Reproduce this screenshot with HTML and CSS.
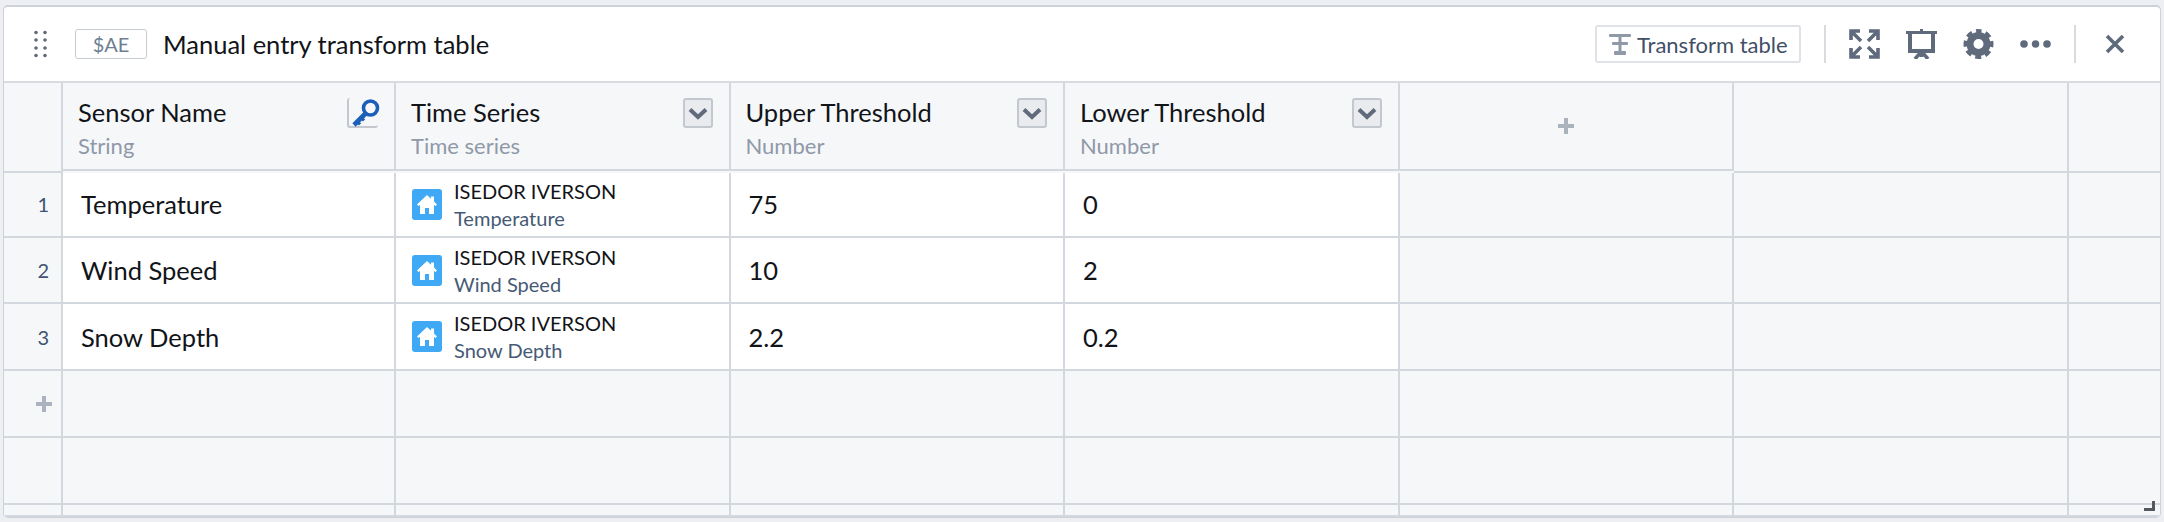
FILE: index.html
```html
<!DOCTYPE html>
<html lang="en">
<head>
    <meta charset="UTF-8">
    <title>Manual entry transform table</title>
    <link rel="stylesheet" href="styles.css">
</head>
<body>
    <div class="card">
        <div class="toolbar">
            <svg class="drag" width="14" height="28" viewBox="0 0 14 28"><g fill="#5f6b7c"><circle cx="2" cy="2.5" r="1.8"/><circle cx="11" cy="2.5" r="1.8"/><circle cx="2" cy="10" r="1.8"/><circle cx="11" cy="10" r="1.8"/><circle cx="2" cy="18" r="1.8"/><circle cx="11" cy="18" r="1.8"/><circle cx="2" cy="25.5" r="1.8"/><circle cx="11" cy="25.5" r="1.8"/></g></svg>
            <span class="badge">$AE</span>
            <span class="title">Manual entry transform table</span>
            <button class="transform-btn">
                <svg width="22" height="21" viewBox="0 0 22 21"><g fill="#8f99a8"><rect x="0" y="0" width="22" height="3" rx="1"/><rect x="3" y="8" width="16" height="3" rx="1"/><rect x="5" y="17" width="12" height="4" rx="1"/><rect x="9.5" y="2" width="3" height="16"/></g></svg>
                Transform table
            </button>
            <span class="divider"></span>
            <svg class="tool tool-first" width="31" height="30" viewBox="0 0 31 30"><g fill="none" stroke="#5f6b7c" stroke-width="3.6"><path d="M2 11V2h9M3 3l9 9"/><path d="M29 11V2h-9M28 3l-9 9"/><path d="M2 19v9h9M3 27l9-9"/><path d="M29 19v9h-9M28 27l-9-9"/></g></svg>
            <svg class="tool" width="31" height="30" viewBox="0 0 31 30"><g fill="none" stroke="#5f6b7c"><path stroke-width="3" d="M0 3.5h31"/><path stroke-width="4" d="M4 4v18h23V4"/><path stroke-width="3.5" d="M15.5 22v6M15 23l-6 7M16 23l6 7"/></g><rect x="14" y="0" width="3" height="3" fill="#5f6b7c"/></svg>
            <svg class="tool" width="31" height="30" viewBox="0 0 31 30"><g fill="none" stroke="#5f6b7c"><circle cx="15.5" cy="15" r="8.5" stroke-width="7"/><circle cx="15.5" cy="15" r="12.5" stroke-width="5" stroke-dasharray="5.8 4.02" stroke-dashoffset="2.9" transform="rotate(-90 15.5 15)"/></g></svg>
            <svg class="tool" width="31" height="8" viewBox="0 0 31 8"><g fill="#5f6b7c"><circle cx="4" cy="4" r="3.8"/><circle cx="15.5" cy="4" r="3.8"/><circle cx="27" cy="4" r="3.8"/></g></svg>
            <span class="divider divider-last"></span>
            <svg class="close" width="20" height="20" viewBox="0 0 20 20"><path d="M2 2l16 16M18 2L2 18" fill="none" stroke="#5f6b7c" stroke-width="3.6"/></svg>
        </div>

        <div class="table">
            <!-- header row -->
            <div class="cell head-index"></div>
            <div class="cell head">
                <div class="head-text"><div class="col-name">Sensor Name</div><div class="col-type">String</div></div>
                <span class="key-btn">
                    <svg width="31" height="30" viewBox="0 0 31 30"><g fill="none" stroke="#1c5fb8"><circle cx="21.5" cy="10" r="7" stroke-width="3.6"/><path stroke-width="4.6" d="M16.5 15.5L5 27"/><path stroke-width="3" d="M7.5 22.5l3.5 4M11.5 18.5l3.5 4"/></g></svg>
                </span>
            </div>
            <div class="cell head">
                <div class="head-text"><div class="col-name">Time Series</div><div class="col-type">Time series</div></div>
                <span class="menu-btn"><svg width="20" height="13" viewBox="0 0 20 13"><path d="M2 2.5l8 7.5 8-7.5" fill="none" stroke="#5f6b7c" stroke-width="4"/></svg></span>
            </div>
            <div class="cell head">
                <div class="head-text"><div class="col-name">Upper Threshold</div><div class="col-type">Number</div></div>
                <span class="menu-btn"><svg width="20" height="13" viewBox="0 0 20 13"><path d="M2 2.5l8 7.5 8-7.5" fill="none" stroke="#5f6b7c" stroke-width="4"/></svg></span>
            </div>
            <div class="cell head">
                <div class="head-text"><div class="col-name">Lower Threshold</div><div class="col-type">Number</div></div>
                <span class="menu-btn"><svg width="20" height="13" viewBox="0 0 20 13"><path d="M2 2.5l8 7.5 8-7.5" fill="none" stroke="#5f6b7c" stroke-width="4"/></svg></span>
            </div>
            <div class="cell head head-add"><span class="plus"></span></div>
            <div class="cell"></div>
            <div class="cell cell-last"></div>

            <!-- row 1 -->
            <div class="cell index raised">1</div>
            <div class="cell data raised">Temperature</div>
            <div class="cell data series">
                <svg class="home" width="30" height="31" viewBox="0 0 30 31"><rect width="30" height="31" rx="3" fill="#3fa9f5"/><path d="M15 6L5 15.5l1.5 1.6L8 16v9h5v-6h4v6h5v-9l1.5 1.1 1.5-1.6-3-2.9V7.5h-3v2.3z" fill="#fff"/></svg>
                <div><div class="series-name">ISEDOR IVERSON</div><div class="series-sub">Temperature</div></div>
            </div>
            <div class="cell data raised">75</div>
            <div class="cell data raised">0</div>
            <div class="cell"></div>
            <div class="cell"></div>
            <div class="cell cell-last"></div>

            <!-- row 2 -->
            <div class="cell index">2</div>
            <div class="cell data">Wind Speed</div>
            <div class="cell data series">
                <svg class="home" width="30" height="31" viewBox="0 0 30 31"><rect width="30" height="31" rx="3" fill="#3fa9f5"/><path d="M15 6L5 15.5l1.5 1.6L8 16v9h5v-6h4v6h5v-9l1.5 1.1 1.5-1.6-3-2.9V7.5h-3v2.3z" fill="#fff"/></svg>
                <div><div class="series-name">ISEDOR IVERSON</div><div class="series-sub">Wind Speed</div></div>
            </div>
            <div class="cell data">10</div>
            <div class="cell data">2</div>
            <div class="cell"></div>
            <div class="cell"></div>
            <div class="cell cell-last"></div>

            <!-- row 3 -->
            <div class="cell index">3</div>
            <div class="cell data">Snow Depth</div>
            <div class="cell data series">
                <svg class="home" width="30" height="31" viewBox="0 0 30 31"><rect width="30" height="31" rx="3" fill="#3fa9f5"/><path d="M15 6L5 15.5l1.5 1.6L8 16v9h5v-6h4v6h5v-9l1.5 1.1 1.5-1.6-3-2.9V7.5h-3v2.3z" fill="#fff"/></svg>
                <div><div class="series-name">ISEDOR IVERSON</div><div class="series-sub">Snow Depth</div></div>
            </div>
            <div class="cell data">2.2</div>
            <div class="cell data">0.2</div>
            <div class="cell"></div>
            <div class="cell"></div>
            <div class="cell cell-last"></div>

            <!-- add row -->
            <div class="cell index"><span class="plus"></span></div>
            <div class="cell"></div><div class="cell"></div><div class="cell"></div><div class="cell"></div><div class="cell"></div><div class="cell"></div><div class="cell cell-last"></div>

            <!-- empty rows -->
            <div class="cell"></div><div class="cell"></div><div class="cell"></div><div class="cell"></div><div class="cell"></div><div class="cell"></div><div class="cell"></div><div class="cell cell-last"></div>
            <div class="cell"></div><div class="cell"></div><div class="cell"></div><div class="cell"></div><div class="cell"></div><div class="cell"></div><div class="cell"></div><div class="cell cell-last"></div>

            <span class="resize"></span>
        </div>
    </div>
</body>
</html>
```

FILE: styles.css
```css
body {
    margin: 0;
    height: 522px;
    padding: 5px 3px 7px;
    box-sizing: border-box;
    background-color: #edeff2;
    font-family: "Lato", "Noto Sans", sans-serif;
    color: #111418;
    overflow: hidden;
}

.card {
    height: 100%;
    display: flex;
    flex-direction: column;
    background-color: #fff;
    border: 1px solid #cdd1d8;
    border-top-width: 2px;
    border-radius: 5px;
    overflow: hidden;
}

/* Toolbar */
.toolbar {
    height: 74px;
    flex: none;
    display: flex;
    align-items: center;
    padding-left: 27px;
    padding-right: 35px;
}

.drag {
    margin-right: 27px;
    margin-left: 3px;
}

.badge {
    width: 72px;
    height: 30px;
    box-sizing: border-box;
    display: flex;
    align-items: center;
    justify-content: center;
    border: 1px solid #c5cbd3;
    border-radius: 3px;
    color: #6f7f93;
    font-size: 20px;
}

.title {
    margin-left: 16px;
    font-size: 25.5px;
    flex: 1;
}

.transform-btn {
    width: 206px;
    height: 38px;
    padding: 0 0 0 12px;
    display: flex;
    align-items: center;
    gap: 6px;
    background: #fff;
    border: 2px solid #dfe2e6;
    border-radius: 3px;
    color: #3f5068;
    font-family: inherit;
    font-size: 22px;
}

.divider {
    width: 2px;
    height: 38px;
    margin-left: 23px;
    background-color: #d8dbe0;
}

.divider-last {
    margin-left: 23px;
}

.tool {
    margin-left: 26px;
}

.tool-first {
    margin-left: 23px;
}

.close {
    margin-left: 29px;
}

/* Table */
.table {
    position: relative;
    flex: 1;
    display: grid;
    grid-template-columns: 59px 333px repeat(5, 334.5px) 1fr;
    grid-template-rows: 90px 65px 66px 67px 67px 67px 1fr;
    background-color: #f6f7f9;
    border-top: 2px solid #d8dbe0;
}

.cell {
    box-sizing: border-box;
    border-right: 2px solid #d3d8de;
    border-bottom: 2px solid #d3d8de;
}

.cell-last {
    border-right: none;
}

.head-index {
    height: 90px;
}

.head {
    height: 88px;
    display: flex;
    justify-content: space-between;
    padding: 13px 16px 0 15px;
}

.head-add {
    align-items: center;
    justify-content: center;
    padding: 0;
}

.col-name {
    font-size: 25.5px;
    line-height: 32px;
}

.col-type {
    margin-top: 5px;
    font-size: 22px;
    line-height: 26px;
    color: #8f99a8;
}

.menu-btn {
    width: 30px;
    height: 30px;
    box-sizing: border-box;
    margin-top: 2px;
    display: flex;
    align-items: center;
    justify-content: center;
    background-color: #e9ebee;
    border: 2px solid #c3c8cf;
    border-radius: 3px;
}

.key-btn {
    width: 31px;
    height: 30px;
    box-sizing: border-box;
    margin-top: 2px;
    border-left: 2px solid #c3c8cf;
    border-bottom: 2px solid #c3c8cf;
    border-radius: 3px;
    line-height: 0;
}

.index {
    background-color: #f6f7f9;
    display: flex;
    align-items: center;
    justify-content: flex-end;
    padding-right: 12px;
    font-size: 20px;
    color: #3e5372;
}

.data {
    background-color: #fff;
    display: flex;
    align-items: center;
    padding-left: 18px;
    font-size: 25.5px;
}

/* first row text sits a little higher than the rows below */
.raised {
    padding-bottom: 2px;
}

.series {
    gap: 12px;
    padding-left: 16px;
}

.series-name {
    font-size: 20px;
    line-height: 27px;
}

.series-sub {
    margin-top: 1px;
    font-size: 20px;
    line-height: 25px;
    color: #465a75;
}

.plus {
    width: 16px;
    height: 16px;
    display: block;
    background:
        linear-gradient(#abb3bf, #abb3bf) center / 100% 4px no-repeat,
        linear-gradient(#abb3bf, #abb3bf) center / 4px 100% no-repeat;
    border-radius: 2px;
}

.index .plus {
    margin-right: -3px;
}

/* corner grip */
.resize {
    position: absolute;
    right: 5px;
    bottom: 6px;
    width: 11px;
    height: 10px;
    box-sizing: border-box;
    border-right: 3px solid #55585e;
    border-bottom: 3px solid #55585e;
}
```
